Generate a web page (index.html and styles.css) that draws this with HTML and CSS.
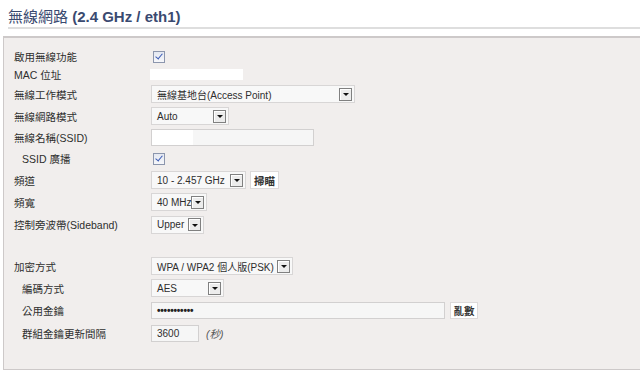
FILE: index.html
```html
<!DOCTYPE html>
<html lang="zh-Hant">
<head>
  <meta charset="UTF-8">
  <title>無線網路</title>
  <link rel="stylesheet" href="styles.css">
</head>
<body>
  <h1 class="page-title">無線網路 <b>(2.4 GHz / eth1)</b></h1>
  <section class="panel">
    <div class="row r17">
      <span class="label">啟用無線功能</span>
      <span class="check"></span>
    </div>
    <div class="row r18">
      <span class="label">MAC 位址</span>
      <span class="mac"></span>
    </div>
    <div class="row">
      <span class="label">無線工作模式</span>
      <div class="select w-mode"><span class="value">無線基地台(Access Point)</span><span class="drop"></span></div>
    </div>
    <div class="row">
      <span class="label">無線網路模式</span>
      <div class="select w-net"><span class="value">Auto</span><span class="drop"></span></div>
    </div>
    <div class="row r21">
      <span class="label">無線名稱(SSID)</span>
      <div class="field w-ssid"><span class="blank"></span></div>
    </div>
    <div class="row r21">
      <span class="label sub">SSID 廣播</span>
      <span class="check"></span>
    </div>
    <div class="row">
      <span class="label">頻道</span>
      <div class="select w-chan"><span class="value">10 - 2.457 GHz</span><span class="drop"></span></div>
      <span class="btn">掃瞄</span>
    </div>
    <div class="row">
      <span class="label">頻寬</span>
      <div class="select w-bw"><span class="value">40 MHz</span><span class="drop"></span></div>
    </div>
    <div class="row r23">
      <span class="label">控制旁波帶(Sideband)</span>
      <div class="select w-side"><span class="value">Upper</span><span class="drop"></span></div>
    </div>

    <div class="spacer"></div>

    <div class="row">
      <span class="label">加密方式</span>
      <div class="select w-sec"><span class="value">WPA / WPA2 個人版(PSK)</span><span class="drop"></span></div>
    </div>
    <div class="row">
      <span class="label sub">編碼方式</span>
      <div class="select w-cipher"><span class="value">AES</span><span class="drop"></span></div>
    </div>
    <div class="row r23">
      <span class="label sub">公用金鑰</span>
      <div class="field w-psk"><span class="dots">•••••••••••</span></div>
      <span class="btn btn-wide">亂數</span>
    </div>
    <div class="row">
      <span class="label sub">群組金鑰更新間隔</span>
      <div class="field w-int">3600</div>
      <span class="unit">(秒)</span>
    </div>
  </section>
</body>
</html>
```

FILE: styles.css
```css
html, body {
  margin: 0;
  overflow: hidden;
  background: #fff;
}
body {
  font-family: "Liberation Sans", "Noto Sans CJK TC", sans-serif;
  font-size: 10.5px;
  color: #2e2e2e;
}

.page-title {
  margin: 0 0 7px 8px;
  padding-top: 7px;
  height: 20px;
  line-height: 20px;
  font-size: 15px;
  font-weight: normal;
  color: #3a4a70;
  border-bottom: 2px solid #dedede;
}
.page-title b {
  font-weight: bold;
}

.panel {
  margin-left: 3px;
  margin-right: -20px;
  padding: 10px 0 25px 10px;
  background: #f1eeed;
  border: 1px solid #cdc9c9;
  border-top-width: 2px;
}

.row {
  display: flex;
  align-items: center;
  height: 22px;
}
.r17 { height: 17px; }
.r18 { height: 18px; }
.r21 { height: 21px; }
.r23 { height: 23px; }
.spacer { height: 19px; }

.label {
  width: 137px;
  flex: none;
  white-space: nowrap;
}
.label.sub {
  padding-left: 8px;
  width: 129px;
}

.check {
  width: 10px;
  height: 10px;
  margin-left: 2px;
  border: 1px solid #8c96ad;
  background: linear-gradient(#e4e8f1, #f6f7fa);
  position: relative;
}
.check::after {
  content: "";
  position: absolute;
  left: 3px;
  top: 0;
  width: 3px;
  height: 6px;
  border: solid #3b5bb5;
  border-width: 0 1.5px 1.5px 0;
  transform: rotate(40deg);
}

.mac {
  width: 93px;
  height: 11px;
  margin-left: -1px;
  background: #fff;
}

.select {
  display: flex;
  align-items: center;
  height: 18px;
  box-sizing: border-box;
  border: 1px solid #d8d6d6;
  background: #f8f8f8;
  padding: 0 2px 0 5px;
  font-size: 10px;
}
.select .value {
  flex: 1;
  white-space: nowrap;
}
.drop {
  width: 13px;
  height: 13px;
  box-sizing: border-box;
  border: 1px solid #808080;
  background: #ececec;
  box-shadow: inset 1px 1px 0 #fff;
  display: flex;
  align-items: center;
  justify-content: center;
  flex: none;
}
.drop::after {
  content: "";
  border-left: 3px solid transparent;
  border-right: 3px solid transparent;
  border-top: 3px solid #111;
  margin-top: 1px;
}

.w-mode { width: 204px; }
.w-net { width: 78px; }
.w-chan { width: 95px; }
.w-bw { width: 56px; }
.w-side { width: 53px; }
.w-sec { width: 142px; }
.w-cipher { width: 73px; }

.field {
  display: flex;
  align-items: center;
  height: 17px;
  box-sizing: border-box;
  border: 1px solid #d2d0d0;
  background: #f6f6f6;
  padding-left: 5px;
  font-size: 10px;
}
.w-ssid { width: 163px; padding-left: 0; }
.w-psk { width: 294px; }
.w-int { width: 48px; }

.blank {
  width: 41px;
  height: 15px;
  background: #fff;
}
.dots {
  font-size: 10px;
  font-weight: bold;
  letter-spacing: -0.2px;
  color: #222;
}

.btn {
  margin-left: 4px;
  width: 29px;
  height: 18px;
  box-sizing: border-box;
  border: 1px solid #dddada;
  background: #fff;
  font-weight: bold;
  color: #333;
  display: flex;
  align-items: center;
  justify-content: center;
}
.btn-wide {
  margin-left: 5px;
  width: 28px;
  height: 17px;
}

.unit {
  margin-left: 7px;
  font-style: italic;
  color: #555;
}
```
